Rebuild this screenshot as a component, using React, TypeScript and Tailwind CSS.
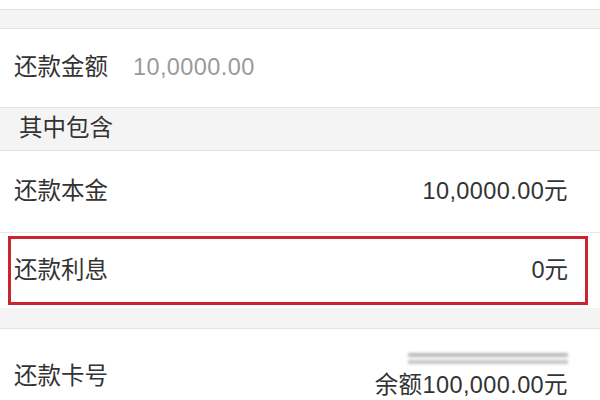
import React from "react";

const font = { fontFamily: '"Liberation Sans", "Noto Sans CJK SC", sans-serif' };

export default function App() {
  return (
    <div
      className="w-[600px] h-[400px] overflow-hidden bg-white text-[#333333] flex flex-col"
      style={font}
    >
      <div className="h-[10px] shrink-0 bg-white border-b border-[#e2e2e2]" />
      <div className="h-[19px] shrink-0 bg-[#f4f4f4] border-b border-[#e2e2e2]" />
      <div className="h-[79px] shrink-0 flex items-center pl-[14px] border-b border-[#e2e2e2] text-[23.5px]">
        <span>还款金额</span>
        <span className="ml-[25px] text-[#9a9a9a] tracking-[0.4px]">10,0000.00</span>
      </div>
      <div className="h-[43px] shrink-0 flex items-center pl-[19px] bg-[#f4f4f4] border-b border-[#e2e2e2] text-[23.5px]">
        其中包含
      </div>
      <div className="h-[82px] shrink-0 flex items-center justify-between pl-[14px] pr-[32px] border-b border-[#e8e8e8] text-[23.5px]">
        <span>还款本金</span>
        <span className="tracking-[0.4px]">10,0000.00元</span>
      </div>
      <div className="h-[75px] shrink-0 bg-white pt-[3px] pl-[8px] pr-[12px]">
        <div className="h-[69px] border-[3px] border-[#c9242f] flex items-center justify-between pl-[3px] pr-[17px] text-[23.5px]">
          <span>还款利息</span>
          <span>0元</span>
        </div>
      </div>
      <div className="h-[21px] shrink-0 bg-[#f4f4f4] border-b border-[#e2e2e2]" />
      <div className="flex-1 flex justify-between pl-[14px] pr-[32px] text-[23.5px]">
        <span className="mt-[30px]">还款卡号</span>
        <div className="flex flex-col items-end pt-[21px]">
          <div className="w-[160px] h-[16px] blur-[1.5px] flex flex-col justify-center gap-[3px]">
            <div className="h-[4px] bg-[#b8b8b8]" />
            <div className="h-[4px] bg-[#c4c4c4]" />
          </div>
          <span className="mt-[4px] leading-[30px] tracking-[0.4px]">余额100,000.00元</span>
        </div>
      </div>
    </div>
  );
}
